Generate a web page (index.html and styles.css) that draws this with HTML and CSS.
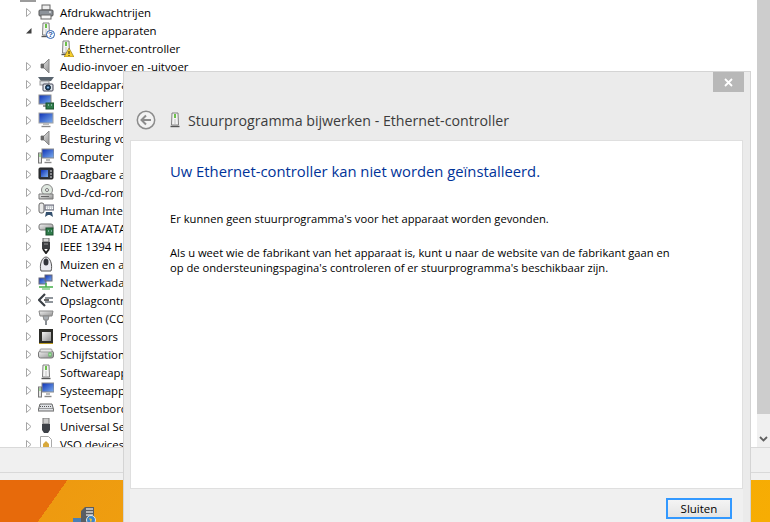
FILE: index.html
```html
<!DOCTYPE html>
<html lang="nl">
<head>
<meta charset="utf-8">
<title>Apparaatbeheer</title>
<link rel="stylesheet" href="styles.css">
</head>
<body>
<svg class="defs" width="0" height="0" aria-hidden="true">
  <defs>
    <linearGradient id="silver" x1="0" y1="0" x2="1" y2="1"><stop offset="0" stop-color="#f2f2f2"/><stop offset="1" stop-color="#8f8f8f"/></linearGradient>
    <linearGradient id="screen" x1="0" y1="0" x2="1" y2="1"><stop offset="0" stop-color="#0b2fb5"/><stop offset="1" stop-color="#7fb0ee"/></linearGradient>
    <symbol id="root-pc" viewBox="0 0 16 16"><path d="M0 14h16v2H0z" fill="#9c9c9c"/></symbol>
    <symbol id="nic" viewBox="0 0 16 16"><path d="M5 1h6l.5 12h-7z" fill="#f4f4f4" stroke="#808080"/><rect x="7" y="2" width="2" height="4" fill="#6cc04a"/><path d="M8 7v5" stroke="#c4c4c4"/><path d="M3.500 14.500h9" stroke="#555" stroke-width="1.400"/></symbol>
    <symbol id="printer" viewBox="0 0 16 16"><rect x="4" y="1" width="8" height="5" fill="#eee" stroke="#666"/><rect x="1" y="6" width="14" height="6" rx="1" fill="#8d939a" stroke="#555"/><rect x="3" y="11" width="10" height="4" fill="#f7f7f7" stroke="#666"/><path d="M11 8h2" stroke="#fff"/></symbol>
    <symbol id="speaker" viewBox="0 0 16 16"><path d="M3 6h3l5-5v14l-5-5H3z" fill="url(#silver)" stroke="#8a8a8a"/><path d="M3 6h3v4H3z" fill="#666"/></symbol>
    <symbol id="camera" viewBox="0 0 16 16"><path d="M0 1h16l-3 4H3z" fill="#59646e"/><rect x="2" y="5" width="9" height="4" fill="#dfe3e6" stroke="#999"/><rect x="5" y="8" width="10" height="7" rx="1" fill="#dfe6ec" stroke="#445"/><circle cx="10" cy="11.500" r="2.500" fill="#24486e" stroke="#123"/><circle cx="10" cy="11.500" r="1" fill="#8fc0ea"/></symbol>
    <symbol id="monitor-card" viewBox="0 0 16 16"><rect x="1" y="1" width="12" height="9" fill="url(#screen)" stroke="#8a8a8a"/><path d="M5 12h5" stroke="#999" stroke-width="2"/><rect x="8" y="9" width="8" height="6" fill="#2f7d4a" stroke="#1b4f2d"/><path d="M10 11h1m2 0h1" stroke="#cde"/></symbol>
    <symbol id="monitor" viewBox="0 0 16 16"><rect x="1" y="1" width="14" height="10" fill="url(#screen)" stroke="#a0a0a0"/><path d="M5 11h6v2H5z" fill="#bbb"/><path d="M3.500 14.500h9" stroke="#888" stroke-width="1.400"/></symbol>
    <symbol id="computer" viewBox="0 0 16 16"><rect x="4" y="1" width="12" height="9" fill="url(#screen)" stroke="#8a8a8a"/><path d="M8 11h4v2H8z" fill="#bbb"/><path d="M6.500 14.500h7" stroke="#888" stroke-width="1.400"/><rect x="0.500" y="5" width="3" height="10" fill="#e5e5e5" stroke="#777"/><rect x="1.500" y="6" width="1" height="3" fill="#5cc04a"/></symbol>
    <symbol id="portable" viewBox="0 0 16 16"><rect x="1" y="2" width="14" height="11" rx="1" fill="#30343a" stroke="#222"/><rect x="3" y="4" width="7" height="7" fill="url(#screen)"/><path d="M12 5h2M12 8h2M12 11h2" stroke="#ddd"/></symbol>
    <symbol id="disc" viewBox="0 0 16 16"><circle cx="9" cy="6" r="5.500" fill="#dfe8e0" stroke="#888"/><circle cx="9" cy="6" r="1.500" fill="#fff" stroke="#777"/><path d="M1 10h14v5H1z" fill="url(#silver)" stroke="#777"/><path d="M3 12.500h8" stroke="#666"/></symbol>
    <symbol id="hid" viewBox="0 0 16 16"><rect x="1" y="1" width="5" height="10" rx="2" fill="#e9e9e9" stroke="#666"/><rect x="7" y="3" width="9" height="5" fill="#c4c9ce" stroke="#667"/><path d="M8 5h7M8 6.500h7" stroke="#fff" stroke-dasharray="1 1"/><path d="M7 15l1-5h6l1 5-3-2h-2z" fill="#34506e"/></symbol>
    <symbol id="ide" viewBox="0 0 16 16"><rect x="1" y="4" width="14" height="6" rx="2" fill="url(#silver)" stroke="#777"/><rect x="8" y="8" width="7" height="7" fill="#2f7d4a" stroke="#1b4f2d"/><path d="M10 11h1m2 0h1" stroke="#cde"/></symbol>
    <symbol id="firewire" viewBox="0 0 16 16"><rect x="5" y="0" width="6" height="4" fill="#d8d8d8" stroke="#666"/><rect x="4" y="4" width="8" height="7" fill="#3b3d40"/><path d="M5 11l3 4 3-4" fill="none" stroke="#222" stroke-width="2"/><path d="M6 6h4" stroke="#999"/></symbol>
    <symbol id="mouse" viewBox="0 0 16 16"><path d="M3 15C1 9 4 1 8 1s7 8 5 14z" fill="#e9e9ef" stroke="#555"/><ellipse cx="8" cy="6" rx="2.500" ry="3.500" fill="#32343a"/></symbol>
    <symbol id="network" viewBox="0 0 16 16"><rect x="1" y="4" width="7" height="6" fill="url(#screen)" stroke="#667"/><rect x="7" y="1" width="7" height="6" fill="url(#screen)" stroke="#667"/><path d="M1 13h14M8 9v4" stroke="#45b04a" stroke-width="1.500"/><path d="M4 15h8" stroke="#45b04a"/></symbol>
    <symbol id="storage" viewBox="0 0 16 16"><path d="M7 2L1 8l6 6" fill="none" stroke="#3a3f45" stroke-width="2.200"/><path d="M7 5h8v2H7zM7 9h8v2H7z" fill="#8f959b"/><path d="M6 8h5" stroke="#333" stroke-width="1.500"/></symbol>
    <symbol id="ports" viewBox="0 0 16 16"><path d="M1 1h14l-1 5H2z" fill="url(#silver)" stroke="#888"/><path d="M5 6h6l-1 4H6z" fill="#a9aeb3" stroke="#888"/><rect x="7" y="10" width="2" height="5" fill="#8a8f94"/></symbol>
    <symbol id="cpu" viewBox="0 0 16 16"><rect x="1" y="1" width="14" height="14" fill="#2c2c28"/><rect x="4" y="4" width="9" height="9" fill="url(#silver)"/><path d="M1 15.500h14" stroke="#b99a20"/></symbol>
    <symbol id="drive" viewBox="0 0 16 16"><rect x="0.500" y="5" width="15" height="7" rx="2" fill="url(#silver)" stroke="#777"/><rect x="2" y="3" width="12" height="3" rx="1" fill="#e7e7e7" stroke="#999"/><rect x="11" y="7" width="2" height="3" fill="#fff" stroke="#5b5"/></symbol>
    <symbol id="keyboard" viewBox="0 0 16 16"><path d="M2 4h12l2 7H0z" fill="#dfe2e6" stroke="#666"/><path d="M2 6.500h12M1.500 8.500h13" stroke="#555" stroke-dasharray="1 1"/></symbol>
    <symbol id="usb" viewBox="0 0 16 16"><rect x="5" y="0" width="6" height="6" fill="#c9c9c9" stroke="#777"/><path d="M4 6h8v6l-2 3H6l-2-3z" fill="#3d4147"/></symbol>
    <symbol id="doc" viewBox="0 0 16 16"><path d="M2.500 0.500h8l3 3v12h-11z" fill="#fff" stroke="#aaa"/><path d="M8 5l3 3v3H5V8z" fill="#d8a93c"/></symbol>
    <symbol id="arrow-open" viewBox="0 0 6 9"><path d="M0 7.500L5.500 2v5.500z" fill="#3f3f3f"/></symbol>
    <symbol id="arrow-closed" viewBox="0 0 6 9"><path d="M0.500 0.500L5 4.500 0.500 8.500z" fill="#fff" stroke="#a6a6a6"/></symbol>
  </defs>
</svg>

<div class="desktop">
  <main class="manager">
    <div class="tree-pane">
      <ul class="tree">
        <li class="row row-root"><svg class="icon"><use href="#root-pc"/></svg></li>
        <li class="row"><svg class="arrow"><use href="#arrow-closed"/></svg><svg class="icon"><use href="#printer"/></svg><span>Afdrukwachtrijen</span></li>
        <li class="row"><svg class="arrow"><use href="#arrow-open"/></svg><span class="icon-wrap"><svg class="icon"><use href="#nic"/></svg><span class="badge-q">?</span></span><span>Andere apparaten</span></li>
        <li class="row row-child"><span class="icon-wrap"><svg class="icon"><use href="#nic"/></svg><svg class="badge-warn" viewBox="0 0 10 9"><path d="M5 0l5 9H0z" fill="#f7cf2e" stroke="#8a6d10" stroke-width=".6"/><path d="M5 3v3M5 7v1" stroke="#222"/></svg></span><span>Ethernet-controller</span></li>
        <li class="row"><svg class="arrow"><use href="#arrow-closed"/></svg><svg class="icon"><use href="#speaker"/></svg><span>Audio-invoer en -uitvoer</span></li>
        <li class="row"><svg class="arrow"><use href="#arrow-closed"/></svg><svg class="icon"><use href="#camera"/></svg><span>Beeldapparaten</span></li>
        <li class="row"><svg class="arrow"><use href="#arrow-closed"/></svg><svg class="icon"><use href="#monitor-card"/></svg><span>Beeldschermadapters</span></li>
        <li class="row"><svg class="arrow"><use href="#arrow-closed"/></svg><svg class="icon"><use href="#monitor"/></svg><span>Beeldschermen</span></li>
        <li class="row"><svg class="arrow"><use href="#arrow-closed"/></svg><svg class="icon"><use href="#speaker"/></svg><span>Besturing voor geluid</span></li>
        <li class="row"><svg class="arrow"><use href="#arrow-closed"/></svg><svg class="icon"><use href="#computer"/></svg><span>Computer</span></li>
        <li class="row"><svg class="arrow"><use href="#arrow-closed"/></svg><svg class="icon"><use href="#portable"/></svg><span>Draagbare apparaten</span></li>
        <li class="row"><svg class="arrow"><use href="#arrow-closed"/></svg><svg class="icon"><use href="#disc"/></svg><span>Dvd-/cd-romstations</span></li>
        <li class="row"><svg class="arrow"><use href="#arrow-closed"/></svg><svg class="icon"><use href="#hid"/></svg><span>Human Interface Devices</span></li>
        <li class="row"><svg class="arrow"><use href="#arrow-closed"/></svg><svg class="icon"><use href="#ide"/></svg><span>IDE ATA/ATAPI-controllers</span></li>
        <li class="row"><svg class="arrow"><use href="#arrow-closed"/></svg><svg class="icon"><use href="#firewire"/></svg><span>IEEE 1394 Host-controllers</span></li>
        <li class="row"><svg class="arrow"><use href="#arrow-closed"/></svg><svg class="icon"><use href="#mouse"/></svg><span>Muizen en andere</span></li>
        <li class="row"><svg class="arrow"><use href="#arrow-closed"/></svg><svg class="icon"><use href="#network"/></svg><span>Netwerkadapters</span></li>
        <li class="row"><svg class="arrow"><use href="#arrow-closed"/></svg><svg class="icon"><use href="#storage"/></svg><span>Opslagcontrollers</span></li>
        <li class="row"><svg class="arrow"><use href="#arrow-closed"/></svg><svg class="icon"><use href="#ports"/></svg><span>Poorten (COM en LPT)</span></li>
        <li class="row"><svg class="arrow"><use href="#arrow-closed"/></svg><svg class="icon"><use href="#cpu"/></svg><span>Processors</span></li>
        <li class="row"><svg class="arrow"><use href="#arrow-closed"/></svg><svg class="icon"><use href="#drive"/></svg><span>Schijfstations</span></li>
        <li class="row"><svg class="arrow"><use href="#arrow-closed"/></svg><svg class="icon"><use href="#nic"/></svg><span>Softwareapparaten</span></li>
        <li class="row"><svg class="arrow"><use href="#arrow-closed"/></svg><svg class="icon"><use href="#computer"/></svg><span>Systeemapparaten</span></li>
        <li class="row"><svg class="arrow"><use href="#arrow-closed"/></svg><svg class="icon"><use href="#keyboard"/></svg><span>Toetsenborden</span></li>
        <li class="row"><svg class="arrow"><use href="#arrow-closed"/></svg><svg class="icon"><use href="#usb"/></svg><span>Universal Serial Bus</span></li>
        <li class="row"><svg class="arrow"><use href="#arrow-closed"/></svg><svg class="icon"><use href="#doc"/></svg><span>VSO devices</span></li>
      </ul>
      <div class="scrollbar">
        <div class="scroll-thumb"></div>
        <svg class="scroll-down" viewBox="0 0 9 6"><path d="M1 1l3.500 3.500L8 1" fill="none" stroke="#606060" stroke-width="1.800"/></svg>
      </div>
    </div>
    <div class="status-bar"></div>
    <div class="status-gap"></div>
  </main>
  <div class="wallpaper">
    <svg class="server-icon" viewBox="0 0 24 16"><path d="M8 5l4-4h9v15H8z" fill="#5a5e63"/><path d="M13 3h7M13 6h7M13 9h7" stroke="#d4d4d4" stroke-width="1.500"/><rect x="0" y="12" width="8" height="4" fill="#4b7fb5"/><circle cx="18" cy="14" r="4.500" fill="#3d86c9" stroke="#e8e8e8"/><path d="M16 12l3 1-1 4" fill="#e6c33c"/></svg>
  </div>
</div>

<section class="dialog">
  <div class="titlebar"><button class="close" aria-label="Sluiten"><svg viewBox="0 0 9 9"><path d="M1 1l7 7M8 1L1 8" stroke="#fff" stroke-width="1.800"/></svg></button></div>
  <header class="dialog-head">
    <svg class="back" viewBox="0 0 20 20"><circle cx="10" cy="10" r="8.700" fill="#f3f3f3" stroke="#8c8c8c" stroke-width="1.500"/><path d="M5 10h10M10 5.500L5.500 10l4.500 4.500" fill="none" stroke="#8c8c8c" stroke-width="2"/></svg>
    <svg class="head-icon"><use href="#nic"/></svg>
    <h1>Stuurprogramma bijwerken - Ethernet-controller</h1>
  </header>
  <div class="content">
    <h2>Uw Ethernet-controller kan niet worden geïnstalleerd.</h2>
    <p>Er kunnen geen stuurprogramma's voor het apparaat worden gevonden.</p>
    <p>Als u weet wie de fabrikant van het apparaat is, kunt u naar de website van de fabrikant gaan en<br>op de ondersteuningspagina's controleren of er stuurprogramma's beschikbaar zijn.</p>
  </div>
  <footer class="dialog-foot"><button class="primary">Sluiten</button></footer>
</section>
</body>
</html>
```

FILE: styles.css
```css
* { box-sizing: border-box; }
html, body { margin: 0; padding: 0; width: 770px; height: 522px; overflow: hidden; }
body { position: relative; background: #fff; font-family: "Open Sans", "Noto Sans", sans-serif; font-size: 11.4px; color: #000; }
.defs { position: absolute; }
.desktop { display: flex; flex-direction: column; height: 522px; }
.manager { height: 480px; background: #fff; display: flex; flex-direction: column; flex: none; }
.tree-pane { height: 447px; display: flex; overflow: hidden; flex: none; }
.tree { list-style: none; margin: -15px 0 0; padding: 0 0 0 26px; flex: 1; height: 462px; overflow: hidden; }
.row { height: 18px; display: flex; align-items: center; white-space: nowrap; }
.row-root { margin-left: -6px; }
.arrow { width: 6px; height: 9px; flex: none; margin-right: 6px; }
.icon { width: 16px; height: 16px; display: block; flex: none; }
.row > .icon, .row > .icon-wrap { margin-right: 6px; }
.icon-wrap { position: relative; width: 16px; height: 16px; flex: none; }
.row-child { padding-left: 32px; }
.row-child > .icon-wrap { margin-right: 5px; }
.badge-q { position: absolute; right: -1px; bottom: -1px; width: 9px; height: 9px; border-radius: 50%; background: #fff; border: 1px solid #2a5fb0; color: #1b4fa0; font: bold 8px/7px "Liberation Sans", sans-serif; text-align: center; }
.badge-warn { position: absolute; right: 0; bottom: -1px; width: 10px; height: 9px; }
.scrollbar { width: 13px; margin-left: 6px; background: #f0f0f0; flex: none; position: relative; display: flex; flex-direction: column; }
.scroll-thumb { height: 414px; background: #cdcdcd; }
.scroll-down { width: 9px; height: 6px; margin: 22px auto 0; display: block; }
.status-bar { height: 26px; background: #f0f0f0; border-top: 1px solid #d9d9d9; border-bottom: 1px solid #d9d9d9; flex: none; }
.status-gap { height: 7px; background: #f0f0f0; flex: none; }
.wallpaper { flex: 1; position: relative; background: linear-gradient(125.5deg, #e76a0b 0 55px, #ee9a10 55px, #f0a20e 200px, #f7ad03 100%); overflow: hidden; }
.server-icon { position: absolute; left: 73px; top: 26px; width: 24px; height: 16px; }
.dialog { position: absolute; left: 123px; top: 71px; width: 628px; height: 451px; background: #ebebeb; border: 1px solid #d4d4d4; border-bottom: 0; display: flex; flex-direction: column; }
.titlebar { height: 21px; display: flex; justify-content: flex-end; padding-right: 6px; flex: none; }
.close { width: 31px; height: 20px; border: 0; padding: 0; background: #b8b8b8; display: flex; align-items: center; justify-content: center; }
.close svg { width: 9px; height: 9px; display: block; }
.dialog-head { height: 47px; padding: 7px 0 0 12px; display: flex; align-items: center; flex: none; }
.back { width: 20px; height: 20px; flex: none; margin-right: 11px; }
.head-icon { width: 16px; height: 16px; flex: none; margin-right: 5px; }
h1 { margin: 0; font-size: 14.2px; font-weight: 400; color: #3c3c3c; white-space: nowrap; }
.content { margin: 0 7px 0 6px; height: 349px; background: #fff; border: 1px solid #dfdfdf; padding: 20px 39px 0; flex: none; }
h2 { margin: 0 0 30px; font-size: 14.8px; font-weight: 400; line-height: 20px; color: #003399; white-space: nowrap; }
p { margin: 0 0 19px; font-size: 11.2px; line-height: 15px; white-space: nowrap; }
.dialog-foot { flex: 1; padding: 9px 11px 0 0; display: flex; justify-content: flex-end; align-items: flex-start; background: #f0f0f0; margin: 0 7px 0 6px; }
.primary { width: 66px; height: 21px; border: 2px solid #3399ff; background: linear-gradient(#f4f4f4, #e4e4e4); font: inherit; font-size: 11.5px; padding: 0; color: #000; }
```
